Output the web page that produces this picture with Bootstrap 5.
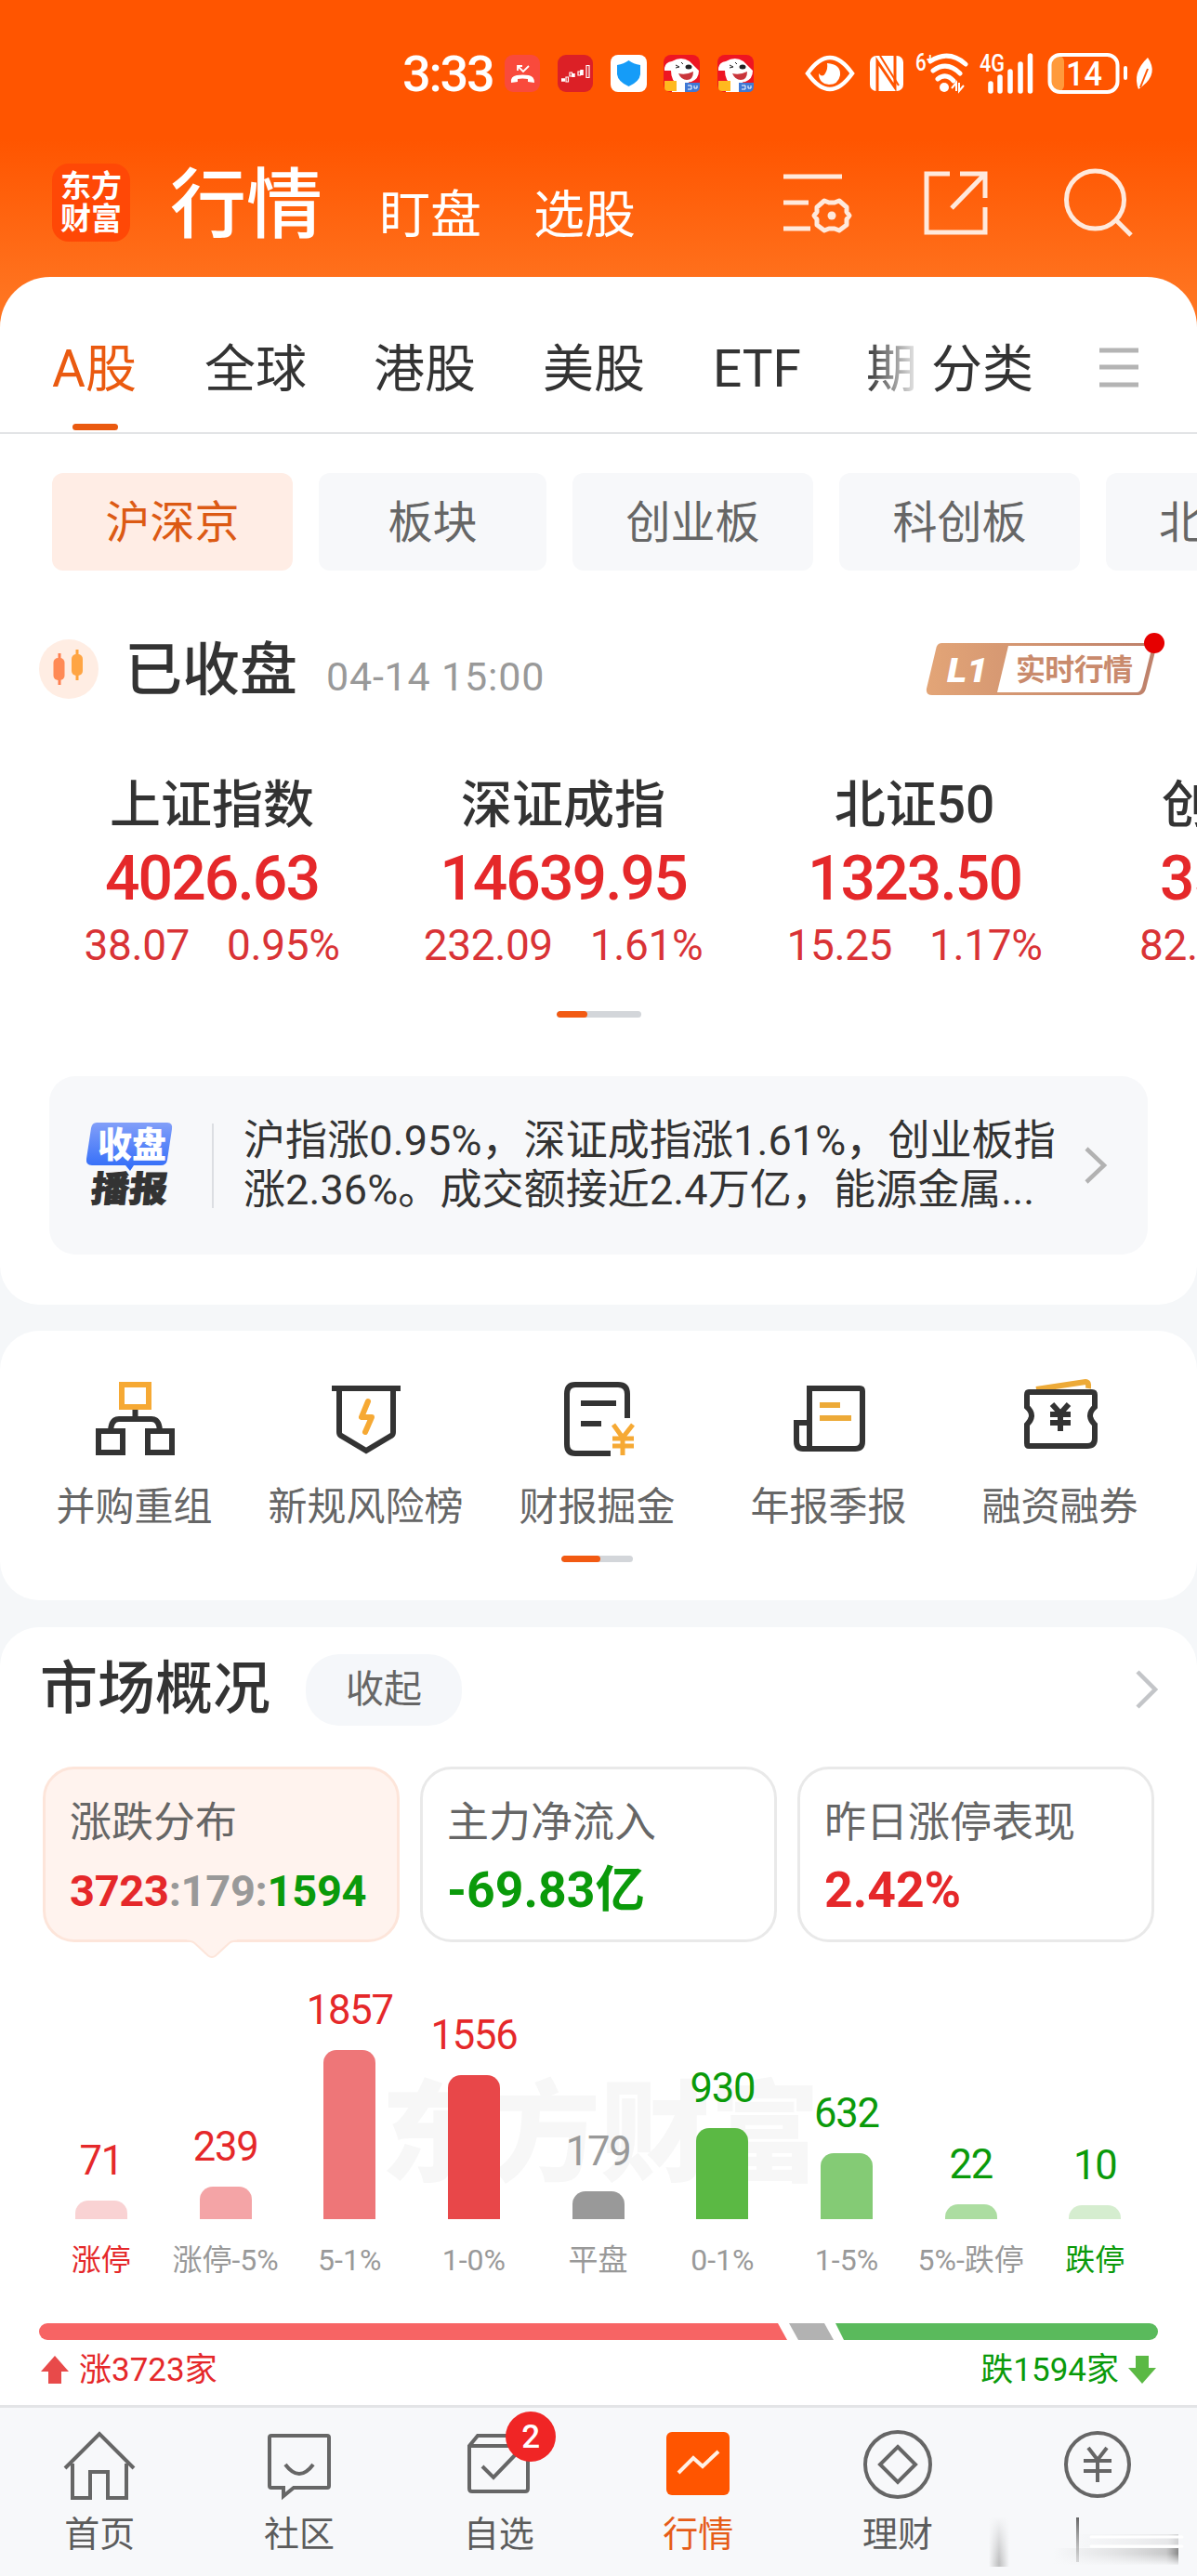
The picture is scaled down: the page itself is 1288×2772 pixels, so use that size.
<!DOCTYPE html>
<html lang="zh-CN">
<head>
<meta charset="utf-8">
<meta name="viewport" content="width=device-width, initial-scale=1">
<title>行情</title>
<link href="https://cdn.jsdelivr.net/npm/bootstrap@5.3.0/dist/css/bootstrap.min.css" rel="stylesheet">
<style>
body{font-family:Roboto,"Noto Sans CJK SC",sans-serif;background:#f5f7f9;color:#333;width:1288px;overflow:hidden;line-height:1}
svg{display:block;flex:none;overflow:visible}
.app{height:2772px;overflow:hidden}
.nw{white-space:nowrap}
.hero{height:352px;background:linear-gradient(#ff5500 0,#ff5500 150px,#ff7420 320px)}
.statusbar{height:158px;padding-left:433px}
.clock{font-size:54px;letter-spacing:-2.2px;width:110px;color:#fff;font-weight:500;padding-top:2px}
.titlebar{height:140px;padding:0 70px 20px 56px}
.logo{width:84px;height:84px;border-radius:18px;background:#ff4806;color:#fff;font-size:33px;line-height:35px;font-weight:700}
.t1{font-size:82px;font-weight:500;color:#fff;width:164px;margin-left:43px;padding-top:5px}
.t2{font-size:55px;color:#fff;padding-top:27px}
.panel{background:#fff;border-radius:42px}
.main{margin-top:-54px;height:1106px;border-radius:54px 54px 42px 42px;position:relative}
.tabs{height:169px;border-bottom:2px solid #e2e4e6;padding:31px 63px 0 56px;font-size:55px}
.tabs .on{color:#ea5a10}
.tabline{width:49px;height:7px;border-radius:4px;background:#ea5a10;left:22px;top:86px}
.fade-r{color:#444;-webkit-mask-image:linear-gradient(90deg,#000 10%,#0003 90%);mask-image:linear-gradient(90deg,#000 10%,#0003 90%)}
.pills{padding:42px 0 0 56px;gap:28px;height:147px;overflow:hidden}
.pill{height:105px;border-radius:12px;background:#f7f8fa;color:#666;font-size:48px;flex:none;width:259px;padding-top:2px}
.pill.on{background:#ffede5;color:#dc5a14}
.closed{height:130px;padding:0 41px 0 42px;margin-top:41px}
.closed h2{font-size:62px;font-weight:500;margin:0 0 0 28px;width:217px;padding-top:4px}
.closed time{font-size:43px;color:#999;padding-top:17px;letter-spacing:.8px}
.l1{font-size:37px;font-style:italic;font-weight:900}
.idx{padding-left:39px;overflow:hidden;height:279px;padding-top:54px}
.idx>div{width:378px;flex:none;text-align:center}
.idx .n{font-size:55px;font-weight:500;height:74px}
.idx .v{font-size:66px;font-weight:500;color:#e5282a;height:81px;letter-spacing:-1.9px}
.idx .c{font-size:46px;color:#d93336;gap:40px;letter-spacing:-.4px}
.pager{height:7px;border-radius:4px;background:#d3d6da;overflow:hidden}
.pager i{display:block;height:7px;background:#f25a12;border-radius:4px}
.news{margin:63px 53px 0;height:192px;border-radius:28px;background:#f7f8fa;padding:0 44px 0 40px}
.news p{font-size:45px;line-height:53px;margin:0 0 0 32px;width:908px;letter-spacing:.1px}
.vline{width:2px;height:91px;background:#dcdee2;margin-left:42px}
.tools{margin-top:28px;height:290px;padding:52px 23px 0 20px;font-size:42px;color:#666}
.tools .item{width:249px;height:190px}
.tools .item svg{margin-bottom:35px}
.market{margin-top:29px;height:870px;padding:0 42px;border-radius:42px 42px 0 0}
.market h2{font-size:62px;font-weight:500;margin:0;width:287px;padding-left:1px}
.fold{width:168px;height:77px;border-radius:36px;background:#f5f7fa;font-size:41px;color:#666}
.stat{height:189px;border:3px solid #e9e9e9;border-radius:34px;width:384px;padding:35px 0 0 26px;background:#fff}
.stat .k{font-size:45px;color:#666;height:68px}
.stat .v{font-size:53.5px;font-weight:700}
.stat.on{background:#fff3ee;border-color:#fde5da}
.stat.on .v{font-size:47px;padding-top:4px;letter-spacing:-.3px}
.tip{left:152px;bottom:-21px}
.r{color:#e5282a}.g{color:#0a9a0a}.gy{color:#999}
.chart{height:270px;margin-top:28px}
.chart .col9{width:133.7px;font-size:43.5px;letter-spacing:-1.2px}
.chart .bar{width:56px;border-radius:14px 14px 0 0;margin-top:21px}
.water{font-size:118px;font-weight:900;color:#f7f7f7;left:368px;top:121px}
.axis{height:112px;padding-top:28px;font-size:32px;color:#999}
.axis div{width:133.7px;text-align:center}
.sum{font-size:35px;margin-top:13px;height:38px}
.nav6{height:184px;margin-top:-33px;background:#f7f8fa;border-top:3px solid #e3e4e6;padding-top:19px;font-size:38px;color:#5c5c5c;position:relative}
.nav6 .tab{width:214.67px}
.nav6 svg{margin-bottom:14px}
.cnt{width:54px;height:54px;border-radius:50%;background:#f02525;color:#fff;font-size:35px;font-weight:500;left:115px;top:-15px}
.smear{left:1064px;top:117px}
</style>
</head>
<body>
<div class="app">
<header class="hero">
 <div class="statusbar d-flex align-items-center">
  <span class="clock">3:33</span>
  <svg width="268" height="40" viewBox="0 0 268 40">
   <rect width="38" height="40" rx="9" fill="#f94a3c"/><path d="M7 30q-1-7 6-8 6-1 13 0 6 1 6 8l-7-1v-3q-6-1-11 0v3z" fill="#fff"/><path d="M14 12l6 6 6-6M14 17v-5h5" stroke="#fff" stroke-width="1.800" fill="none"/>
   <rect x="57" width="38" height="40" rx="9" fill="#dc2026"/><path d="M61 27h4M74 24v-4M83 22v-6" stroke="#fff" stroke-width="3.500"/><path d="M66 24h2.500v5H66zM70 19h2.500v4H70zM79 18h2.500v4H79zM88 11.500h3v13h-3z" stroke="#fff" stroke-width="1.200" fill="none"/>
   <rect x="114" width="39" height="40" rx="8" fill="#fff"/><path d="M133.500 6q5 4 12.500 5v10q-1 8-12.500 13-11.500-5-12.500-13V11q7-1 12.500-5z" fill="#159cf8"/>
   <g id="dog"><rect x="171" width="39" height="40" rx="8" fill="#ee1522"/><path d="M172 14q1-6 8-7 10-6 19 0 4 4 10 10 0 9-8 12l-14 2q-8-2-8-14l-7 0z" fill="#fff"/><ellipse cx="198" cy="13" rx="3.500" ry="2.500" fill="#222"/><path d="M184 11l4 2-4 1M190 8l2 2" stroke="#222" fill="none"/><path d="M187 20q8 2 16-2 0 9-7 9-6 0-9-7" fill="#c9353b"/><path d="M180 28h18v12h-18z" fill="#fff"/><path d="M172 28h13v11h-9q-4 0-4-4z" fill="#ffb91e"/><path d="M194 30h16v4q0 6-6 6h-10z" fill="#3f78d4"/><path d="M197 33h4v4h-4M204 33v3h3v-3" stroke="#fff" fill="none"/></g><use href="#dog" x="58"/>
  </svg>
  <svg style="margin-left:56px" width="374" height="46" viewBox="867 56 374 46" fill="none" stroke="#fff">
   <path d="M869 79q12-17 24-17t24 17q-12 17-24 17t-24-17z" stroke-width="4.500"/><path d="M890 68q15 1 14 13-2 10-12 10-11-1-11-12 4 5 7 0 3-5 2-11z" fill="#fff" stroke="none"/>
   <rect x="936" y="60" width="36" height="38" rx="7" fill="#fff" stroke="none"/><path d="M944 98V66l19 28V60" stroke="#ff5500" stroke-width="3"/><path d="M947 60l20 32" stroke="#ff5500" stroke-width="2"/>
   <path d="M1001 66q20-13 38 3M1004 76q15-11 29 3M1009 85q9-7 17 2" stroke-width="5" stroke-linecap="round"/><circle cx="1016" cy="94" r="5" fill="#fff" stroke="none"/><path d="M1024 95l5-6v9M1032 89v9l5-6" stroke-width="2"/>
   <path d="M1066 98v-8M1076 98V83M1087 98V77M1098 98V69M1108.500 98V60" stroke-width="5.500" stroke-linecap="round"/>
   <rect x="1131" y="60" width="14" height="38" rx="6" fill="#ff9a3c" stroke="none"/><rect x="1129.500" y="59" width="73" height="40" rx="11" stroke-width="4"/><path d="M1211 73v11" stroke-width="4" stroke-linecap="round"/>
   <path d="M1235 62q12 17-6 31l-4 3q-7-18 10-34z" fill="#fff" stroke="none"/><path d="M1235 74l-8 20" stroke="#ff5500" stroke-width="2"/>
   <g fill="#fff" stroke="none" font-family="Roboto" font-weight="500"><text x="985" y="76" font-size="26" textLength="20" lengthAdjust="spacingAndGlyphs">6⁺</text><text x="1054" y="77" font-size="26" textLength="27" lengthAdjust="spacingAndGlyphs">4G</text><text x="1147" y="92" font-size="37" textLength="39" lengthAdjust="spacingAndGlyphs">14</text></g>
  </svg>
 </div>
 <div class="titlebar d-flex align-items-center">
  <div class="logo d-flex flex-column align-items-center justify-content-center"><span>东方</span><span>财富</span></div>
  <span class="t1 nw">行情</span><span class="t2 nw" style="margin-left:61px">盯盘</span><span class="t2 nw" style="margin-left:56px">选股</span>
  <svg class="ms-auto" width="375" height="72" viewBox="843 182 375 72" fill="none" stroke="#ffe9dc" stroke-width="5">
   <path d="M843 190h63M843 218h27M843 246h29"/><path d="M887 216l5 2h6l5-2 8 7v5l3 4-3 4v6l-8 6-5-2h-6l-5 2-8-6v-6l-3-4 3-4v-5z" stroke-linejoin="round"/><circle cx="895" cy="232" r="4.500" fill="#ffe9dc" stroke="none"/>
   <path d="M1022 187h-25v63h63v-27M1033 187h27v26M1059 188l-35 36"/><circle cx="1178.500" cy="215" r="31" /><path d="M1201 237l16 16"/>
  </svg>
 </div>
</header>

<section class="panel main">
 <nav class="tabs d-flex align-items-center nw">
  <span class="on position-relative">A股<i class="tabline position-absolute"></i></span><span style="margin-left:73px">全球</span><span style="margin-left:72px">港股</span><span style="margin-left:72px">美股</span><span style="margin-left:73px">ETF</span><span class="fade-r" style="margin-left:70px">期</span><span style="margin-left:15px">分类</span>
  <svg class="ms-auto" width="42" height="44" stroke="#b4b4b4" stroke-width="5"><path d="M0 2h42M0 20h42M0 39h42"/></svg>
 </nav>
 <div class="pills d-flex">
  <div class="pill on d-flex align-items-center justify-content-center">沪深京</div><div class="pill d-flex align-items-center justify-content-center" style="width:245px">板块</div><div class="pill d-flex align-items-center justify-content-center">创业板</div><div class="pill d-flex align-items-center justify-content-center">科创板</div><div class="pill d-flex align-items-center ps-5"><span style="padding-left:9px">北</span></div>
 </div>
 <div class="closed d-flex align-items-center">
  <svg width="64" height="64"><circle cx="32" cy="32" r="32" fill="#ffede3"/><path d="M22 15v34" stroke="#ff8050" stroke-width="3"/><rect x="15.500" y="20" width="12" height="24" rx="5" fill="#ff8a55"/><path d="M41 11v33" stroke="#ffa33c" stroke-width="3"/><rect x="35" y="16" width="12" height="23" rx="5" fill="#ffa544"/></svg>
  <h2 class="nw">已收盘</h2><time class="nw">04-14 15:00</time>
  <svg class="ms-auto" width="256" height="68" viewBox="-6 6 256 68">
   <defs><linearGradient id="gd"><stop stop-color="#e3a577"/><stop offset="1" stop-color="#bd806a"/></linearGradient></defs>
   <path d="M16 12h226q6 0 5 5l-11 44q-2 7-8 7H6q-7 0-6-7l10-42q1-7 6-7z" fill="url(#gd)"/><path d="M88 15h155l-11 44q-2 6-6 6H76z" fill="#fff"/>
   <text class="l1" x="22" y="54" fill="#fff" textLength="44" lengthAdjust="spacingAndGlyphs">L1</text><text x="96" y="52" font-size="32" font-weight="700" fill="#c98a6c" textLength="126">实时行情</text><circle cx="245" cy="12" r="11" fill="#e60000"/>
  </svg>
 </div>
 <div class="idx d-flex nw">
  <div><div class="n">上证指数</div><div class="v">4026.63</div><div class="c d-flex justify-content-center"><span>38.07</span><span>0.95%</span></div></div>
  <div><div class="n">深证成指</div><div class="v">14639.95</div><div class="c d-flex justify-content-center"><span>232.09</span><span>1.61%</span></div></div>
  <div><div class="n">北证50</div><div class="v">1323.50</div><div class="c d-flex justify-content-center"><span>15.25</span><span>1.17%</span></div></div>
  <div class="text-start"><div class="n" style="padding-left:77px">创</div><div class="v" style="padding-left:75px">35</div><div class="c" style="padding-left:53px">82.</div></div>
 </div>
 <div class="pager mx-auto" style="width:91px;margin-top:24px"><i style="width:33px"></i></div>
 <div class="news d-flex align-items-center">
  <svg width="93" height="92" viewBox="0 0 93 92"><defs><linearGradient id="bl" x2="0" y2="1"><stop stop-color="#829ff9"/><stop offset="1" stop-color="#2e6bf8"/></linearGradient></defs><path d="M11 0h76q6 0 5 7l-5 33q-1 6-7 6H51l-4 6-5-6H6q-7 0-6-7L5 6q1-6 6-6z" fill="url(#bl)"/><g font-weight="900" font-size="38"><text x="12" y="37" fill="#fff" textLength="74" lengthAdjust="spacingAndGlyphs">收盘</text><text x="13" y="85" fill="#333" textLength="82" lengthAdjust="spacingAndGlyphs" stroke="#333" transform="skewX(-6)">播报</text></g></svg>
  <i class="vline"></i>
  <p class="nw">沪指涨0.95%，深证成指涨1.61%，创业板指<br>涨2.36%。成交额接近2.4万亿，能源金属...</p>
  <svg width="24" height="38" fill="none" stroke="#b2b2b2" stroke-width="4.500"><path d="M2 1l19 18L2 37"/></svg>
 </div>
</section>

<section class="panel tools nw">
 <div class="d-flex">
  <div class="item d-flex flex-column align-items-center"><svg width="86" height="82" fill="none" stroke="#333" stroke-width="6"><rect x="29" y="6" width="29" height="24" stroke="#f6a934"/><path d="M43.500 33v10M17 55q1-12 9-12h35q8 0 9 12"/><rect x="4" y="56" width="26" height="23"/><rect x="57" y="56" width="26" height="23"/></svg>并购重组</div>
  <div class="item d-flex flex-column align-items-center"><svg width="74" height="82" fill="none" stroke="#333" stroke-width="6"><path d="M0 10h74M8 11v46q0 3 2 4l27 16 27-16q2-1 2-4V11"/><path d="M39 24l-7 17h11l-7 16" stroke="#f6a934" stroke-linecap="round" stroke-linejoin="round"/></svg>新规风险榜</div>
  <div class="item d-flex flex-column align-items-center"><svg width="74" height="82" fill="none" stroke="#333" stroke-width="6"><path d="M69 42V16Q69 6 59 6H13Q4 6 4 16v54q0 10 9 10h38M19 26h38M19 48h22"/><path d="M54 49l10 14 11-14M64 62v20M53 64h23M53 72h23" stroke="#f6a934" stroke-width="5"/></svg>财报掘金</div>
  <div class="item d-flex flex-column align-items-center"><svg width="76" height="82" fill="none" stroke="#333" stroke-width="6"><path d="M17 75V10h54q3 0 3 3v54q0 8-8 8H10q-7 0-7-8V47h13"/><path d="M28 28h22M28 42h34" stroke="#edaa38"/></svg>年报季报</div>
  <div class="item d-flex flex-column align-items-center"><svg width="76" height="82" fill="none" stroke="#333" stroke-width="6"><path d="M12 11l53-8q4 0 3 7" stroke="#edaa38" stroke-width="6"/><path d="M4 14h68q3 0 3 3v13q-10 9 0 19v15q0 8-8 8H4q-2 0-2-3V49q10-10 0-19V17q0-3 2-3z"/><path d="M29 27l9 10 9-10M38 38v18M27 38h22M27 47h22"/></svg>融资融券</div>
 </div>
 <div class="pager mx-auto" style="width:77px"><i style="width:42px"></i></div>
</section>

<section class="panel market nw">
 <div class="d-flex align-items-center" style="height:134px"><h2>市场概况</h2><div class="fold d-flex align-items-center justify-content-center">收起</div><svg class="ms-auto" width="24" height="40" fill="none" stroke="#c3c5c8" stroke-width="4.500"><path d="M2 1l19 19L2 39"/></svg></div>
 <div class="d-flex justify-content-between" style="padding:16px 4px 0 4px">
  <div class="stat on position-relative"><div class="k">涨跌分布</div><div class="v"><span class="r">3723</span><span class="gy">:179:</span><span class="g">1594</span></div><svg class="tip position-absolute" width="54" height="22" viewBox="0 0 54 22"><path d="M0 0h54v2q-6 0-9 3L31 18q-4 4-8 0L9 5Q6 2 0 2z" fill="#fff3ee"/><path d="M0 2.500q6 0 9 3l14 13q4 3 8 0l14-13q3-3 9-3" fill="none" stroke="#fde5da" stroke-width="2"/></svg></div>
  <div class="stat"><div class="k">主力净流入</div><div class="v g">-69.83亿</div></div>
  <div class="stat"><div class="k">昨日涨停表现</div><div class="v r">2.42%</div></div>
 </div>
 <div class="position-relative">
  <div class="water position-absolute">东方财富</div>
  <div class="chart d-flex align-items-end position-relative">
   <div class="col9 r d-flex flex-column align-items-center">71<i class="bar" style="height:20px;background:#f9d2d3"></i></div>
   <div class="col9 r d-flex flex-column align-items-center">239<i class="bar" style="height:35px;background:#f4a4a6"></i></div>
   <div class="col9 r d-flex flex-column align-items-center">1857<i class="bar" style="height:182px;background:#ee7678"></i></div>
   <div class="col9 r d-flex flex-column align-items-center">1556<i class="bar" style="height:155px;background:#e84749"></i></div>
   <div class="col9 gy d-flex flex-column align-items-center">179<i class="bar" style="height:30px;background:#999"></i></div>
   <div class="col9 g d-flex flex-column align-items-center">930<i class="bar" style="height:98px;background:#5bb944"></i></div>
   <div class="col9 g d-flex flex-column align-items-center">632<i class="bar" style="height:71px;background:#84cb75"></i></div>
   <div class="col9 g d-flex flex-column align-items-center">22<i class="bar" style="height:16px;background:#acdda1"></i></div>
   <div class="col9 g d-flex flex-column align-items-center">10<i class="bar" style="height:15px;background:#d5edcf"></i></div>
  </div>
 </div>
 <div class="axis d-flex"><div class="r">涨停</div><div>涨停-5%</div><div>5-1%</div><div>1-0%</div><div>平盘</div><div>0-1%</div><div>1-5%</div><div>5%-跌停</div><div class="g">跌停</div></div>
 <svg width="1204" height="18"><path d="M9 0h786l10 18H9A9 9 0 0 1 9 0z" fill="#f76464"/><path d="M807 0h38l10 18h-38z" fill="#b2b2b2"/><path d="M857 0h338a9 9 0 0 1 0 18H866z" fill="#5aba5c"/></svg>
 <div class="sum d-flex align-items-center justify-content-between"><span class="r d-flex align-items-center"><svg width="34" height="32" style="margin-right:9px"><path d="M17 1l15 17h-8v13H10V18H2z" fill="#e84a4a"/></svg>涨3723家</span><span class="g d-flex align-items-center">跌1594家<svg width="34" height="32" style="margin-left:8px"><path d="M17 31L2 14h8V1h14v13h8z" fill="#5bb944"/></svg></span></div>
</section>

<nav class="nav6 d-flex nw">
 <div class="tab d-flex flex-column align-items-center"><svg width="76" height="84" fill="none" stroke="#666" stroke-width="4"><path d="M1 46L38 9l37 37M9 41v37h19V50h19v28h20V41"/></svg>首页</div>
 <div class="tab d-flex flex-column align-items-center"><svg width="68" height="84" fill="none" stroke="#666" stroke-width="4"><path d="M4 11h60q2 0 2 2v52q0 2-2 2H28l-11 9v-9H4q-2 0-2-2V13q0-2 2-2zM19 42q15 20 30 0"/></svg>社区</div>
 <div class="tab d-flex flex-column align-items-center position-relative"><svg width="68" height="84" fill="none" stroke="#666" stroke-width="4"><path d="M2 22l9-11h45l9 11v46q0 3-3 3H5q-3 0-3-3zM2 22h63M16 44l12 12 24-25"/></svg>自选<span class="cnt position-absolute d-flex align-items-center justify-content-center">2</span></div>
 <div class="tab d-flex flex-column align-items-center" style="color:#e65c18"><svg width="68" height="84" fill="none"><rect y="7" width="68" height="68" rx="6" fill="#ff5500"/><path d="M13 51l16-16 10 9 17-16" stroke="#fff0e5" stroke-width="4"/></svg>行情</div>
 <div class="tab d-flex flex-column align-items-center"><svg width="74" height="84" fill="none" stroke="#666" stroke-width="4"><circle cx="37" cy="42" r="35"/><path d="M37 23l19 19-19 19-19-19z"/></svg>理财</div>
 <div class="tab d-flex flex-column align-items-center"><svg width="74" height="84" fill="none" stroke="#666" stroke-width="4"><circle cx="37" cy="42" r="34"/><path d="M27 24l10 13 10-13M37 38v23M22 38h30M22 49h30"/></svg></div>
 <svg class="smear position-absolute" width="214" height="54">
  <defs>
   <linearGradient id="s1"><stop stop-color="#999" stop-opacity="0"/><stop offset=".5" stop-color="#999" stop-opacity=".6"/><stop offset="1" stop-color="#999" stop-opacity="0"/></linearGradient>
   <linearGradient id="s2" x2="0" y2="1"><stop stop-color="#f7f8fa"/><stop offset="1" stop-color="#f7f8fa" stop-opacity="0"/></linearGradient>
   <linearGradient id="s3"><stop stop-color="#bbb" stop-opacity="0"/><stop offset=".5" stop-color="#bbb" stop-opacity=".35"/><stop offset=".9" stop-color="#aaa" stop-opacity=".6"/><stop offset="1" stop-color="#888"/></linearGradient>
   <linearGradient id="s4" x2="0" y2="1"><stop stop-color="#666"/><stop offset="1" stop-color="#aaa" stop-opacity=".4"/></linearGradient>
   <linearGradient id="s5" x2="0" y2="1"><stop stop-color="#f7f8fa" stop-opacity="0"/><stop offset="1" stop-color="#f7f8fa"/></linearGradient>
  </defs>
  <rect x="0" y="0" width="22" height="54" fill="url(#s1)"/><rect x="0" y="0" width="22" height="50" fill="url(#s2)"/>
  <rect x="70" y="34" width="134" height="18" fill="url(#s3)"/><rect x="70" y="40" width="134" height="13" fill="url(#s5)"/>
  <rect x="90" y="19" width="114" height="14" fill="url(#s3)" opacity=".35"/>
  <path d="M110 22h98M110 32h98" stroke="#fff" stroke-width="3" stroke-linecap="round"/>
  <rect x="94" y="1" width="3" height="48" fill="url(#s4)"/>
 </svg>
</nav>
</div>
<script src="https://cdn.jsdelivr.net/npm/bootstrap@5.3.0/dist/js/bootstrap.bundle.min.js"></script>
</body>
</html>
